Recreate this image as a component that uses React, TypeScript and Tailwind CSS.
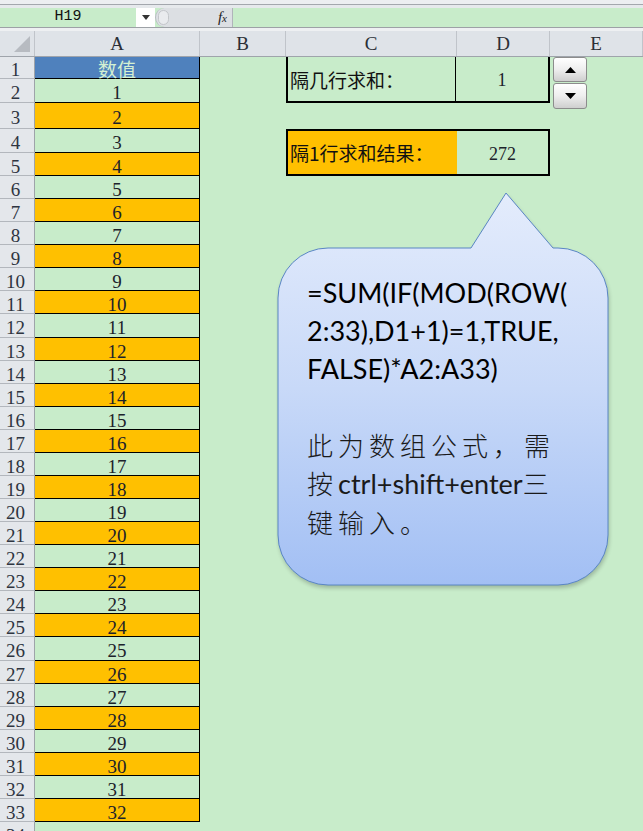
import React from 'react';

// Row boundaries of the sheet body (pixel offsets from the page top).
const bounds: number[] = (() => {
  const b = [57, 79, 103, 129, 153, 176];
  for (let k = 1; k <= 28; k++) b.push(Math.round(176 + (k * 646) / 28));
  return b;
})();
const heights = bounds.slice(1).map((v, i) => v - bounds[i]);
const rowTemplate = [...heights, 24].map((h) => `${h}px`).join(' ');

const columns = [
  { key: 'corner', w: 'w-[35px]', label: '' },
  { key: 'A', w: 'w-[165px]', label: 'A' },
  { key: 'B', w: 'w-[86px]', label: 'B' },
  { key: 'C', w: 'w-[171px]', label: 'C' },
  { key: 'D', w: 'w-[93px]', label: 'D' },
  { key: 'E', w: 'w-[93px]', label: 'E' },
];

function FormulaBar() {
  return (
    <div>
      <div className="h-[4px] bg-[#eceef1]" />
      <div className="h-px bg-[#a3a7ad]" />
      <div className="h-[3px] bg-[#e6e9ec]" />
      <div className="flex h-[19px] bg-[#c8ecca]">
        <div className="flex w-[136px] items-center justify-center font-['Liberation_Mono',monospace] text-[15px] text-[#111]">
          H19
        </div>
        <div className="flex w-[19px] items-center justify-center bg-white">
          <svg width="8" height="5" viewBox="0 0 8 5">
            <path d="M0 0H8L4 5Z" fill="#333" />
          </svg>
        </div>
        <div className="flex w-[77px] items-center justify-between rounded-l-full border-l border-[#b8bcc2] bg-[#dcdfe3] pl-[2px] pr-[5px]">
          <div className="h-[15px] w-[11px] rounded-full border border-[#c3c6ca] bg-[#e9ebee]" />
          <span className="font-['Liberation_Serif',serif] text-[15px] italic leading-none text-[#222]">
            f<span className="text-[11px]">x</span>
          </span>
        </div>
        <div className="flex-1 border-l border-[#b0b4ba]" />
      </div>
      <div className="h-px bg-[#9da1a6]" />
      <div className="h-[3px] bg-[#eef0f2]" />
    </div>
  );
}

function ColumnHeader() {
  return (
    <div className="flex h-[26px] border-b border-[#9fa4ab] bg-[#dfe3e8]">
      {columns.map((c) => (
        <div
          key={c.key}
          className={`${c.w} relative flex flex-none items-center justify-center border-r border-[#c0c4ca] pt-[2px] text-[19px] text-[#2b2f36]`}
        >
          {c.key === 'corner' ? (
            <svg className="absolute left-[14px] top-[5px]" width="16" height="16" viewBox="0 0 16 16">
              <path d="M16 0V16H0Z" fill="#b7bbc1" />
            </svg>
          ) : (
            c.label
          )}
        </div>
      ))}
    </div>
  );
}

function SheetBody() {
  const rows = Array.from({ length: 34 }, (_, i) => i + 1);
  return (
    <div
      className="grid grid-cols-[35px_165px_86px_171px_93px_93px]"
      style={{ gridTemplateRows: rowTemplate }}
    >
      {rows.map((r) => (
        <React.Fragment key={r}>
          <div
            className="col-start-1 flex items-center justify-center border-b border-r border-b-[#b3b7bd] border-r-[#9ea3a9] bg-[#e4e7eb] pr-[3px] pt-[4px] text-[19px] leading-none text-[#2e3440]"
            style={{ gridRow: r }}
          >
            {r}
          </div>
          {r === 1 && (
            <div
              className="col-start-2 flex items-center justify-center border-b border-r border-black bg-[#4f81bd] pt-[2px] font-['Noto_Sans_CJK_SC',sans-serif] text-[19px] leading-none text-[#d4f0d2]"
              style={{ gridRow: r }}
            >
              数值
            </div>
          )}
          {r > 1 && r <= 33 && (
            <div
              className={`col-start-2 flex items-center justify-center border-b border-r border-black pt-[4px] text-[19px] leading-none text-[#1c222b] ${
                r % 2 === 1 ? 'bg-[#ffc000]' : ''
              }`}
              style={{ gridRow: r }}
            >
              {r - 1}
            </div>
          )}
        </React.Fragment>
      ))}

      {/* 隔几行求和 input block */}
      <div className="col-span-2 col-start-4 row-span-2 row-start-1 flex border-b-2 border-l-2 border-r-2 border-black">
        <div className="flex w-[168px] flex-none items-center border-r border-black pl-[2px] font-['Noto_Sans_CJK_SC',sans-serif] text-[19px] leading-none text-[#111]">
          隔几行求和：
        </div>
        <div className="flex flex-1 items-center justify-center pt-[2px] text-[18px] leading-none text-[#1c222b]">
          1
        </div>
      </div>

      {/* result block */}
      <div className="col-span-2 col-start-4 row-span-2 row-start-4 flex border-2 border-black">
        <div className="flex w-[169px] flex-none items-center bg-[#ffc000] pl-[2px] font-['Noto_Sans_CJK_SC',sans-serif] text-[19px] leading-none text-[#111]">
          隔1行求和结果：
        </div>
        <div className="flex flex-1 items-center justify-center pt-[2px] text-[18px] leading-none text-[#1c222b]">
          272
        </div>
      </div>
    </div>
  );
}

function SpinButton() {
  return (
    <div className="absolute left-[553px] top-[57px] flex w-[34px] flex-col gap-px">
      <div className="flex h-[25px] items-center justify-center rounded-[3px] border border-[#8c8c8c] bg-linear-to-b from-[#ffffff] via-[#eeeeee] to-[#cfcfcf]">
        <svg width="11" height="6" viewBox="0 0 11 6">
          <path d="M0 6H11L5.5 0Z" fill="#000" />
        </svg>
      </div>
      <div className="flex h-[26px] items-center justify-center rounded-[3px] border border-[#8c8c8c] bg-linear-to-b from-[#ffffff] via-[#eeeeee] to-[#cfcfcf]">
        <svg width="11" height="6" viewBox="0 0 11 6">
          <path d="M0 0H11L5.5 6Z" fill="#000" />
        </svg>
      </div>
    </div>
  );
}

const bubblePath =
  'M52 58 L195 58 L230 3 L277 58 L282 58 A50 50 0 0 1 332 108 L332 345 A50 50 0 0 1 282 395 L52 395 A50 50 0 0 1 2 345 L2 108 A50 50 0 0 1 52 58 Z';

function Callout() {
  const cjk = "font-['Noto_Sans_CJK_SC',sans-serif] font-light tracking-[5px] text-[26px]";
  return (
    <div className="absolute left-[276px] top-[190px] h-[402px] w-[340px]">
      <svg className="absolute inset-0" width="340" height="402" viewBox="0 0 340 402">
        <defs>
          <linearGradient id="bubbleFill" x1="0" y1="0" x2="0" y2="1">
            <stop offset="0" stopColor="#e4ecfc" />
            <stop offset="0.5" stopColor="#c8d9f8" />
            <stop offset="1" stopColor="#a2bff4" />
          </linearGradient>
          <filter id="bubbleShadow" x="-10%" y="-10%" width="120%" height="120%">
            <feGaussianBlur stdDeviation="2" />
          </filter>
        </defs>
        <path d={bubblePath} fill="#000" opacity="0.22" transform="translate(1 3)" filter="url(#bubbleShadow)" />
        <path d={bubblePath} fill="url(#bubbleFill)" stroke="#5a86c4" strokeWidth="1" />
      </svg>
      <div className="relative pl-[31px] pt-[84px] font-['Lato','Noto_Sans_CJK_SC',sans-serif] text-[27px] leading-[38px] text-black">
        <div>=SUM(IF(MOD(ROW(</div>
        <div>2:33),D1+1)=1,TRUE,</div>
        <div>FALSE)*A2:A33)</div>
        <div className="h-[38px]" />
        <div className={`${cjk} text-[#1a1a1a]`}>此为数组公式，需</div>
        <div className="text-[#1a1a1a]">
          <span className={cjk}>按</span>ctrl+shift+enter<span className={cjk}>三</span>
        </div>
        <div className={`${cjk} text-[#1a1a1a]`}>键输入。</div>
      </div>
    </div>
  );
}

export default function App() {
  return (
    <div className="relative h-[831px] w-[643px] overflow-hidden bg-[#c8ecca] font-['Liberation_Serif',serif]">
      <FormulaBar />
      <ColumnHeader />
      <SheetBody />
      <SpinButton />
      <Callout />
    </div>
  );
}
